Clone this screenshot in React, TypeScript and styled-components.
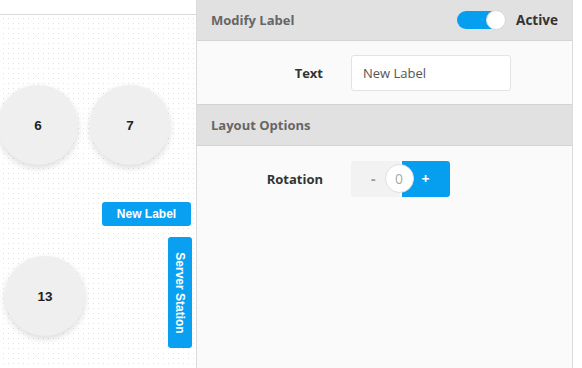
import styled, { createGlobalStyle } from 'styled-components';

const GlobalStyle = createGlobalStyle`
  * { box-sizing: border-box; }
  body {
    margin: 0;
    background: #ffffff;
    font-family: 'Open Sans', 'Liberation Sans', sans-serif;
  }
`;

type Node = { id: string; x: number; y: number };

const TABLES: Node[] = [
  { id: '6', x: -2, y: 70 },
  { id: '7', x: 90, y: 70 },
  { id: '13', x: 5, y: 241 },
];

const App = () => {
  return (
    <>
      <GlobalStyle />
      <Container>
        <CanvasPane>
          <TopStrip />
          <Canvas>
            {TABLES.map((table) => (
              <TableNode key={table.id} $x={table.x} $y={table.y}>
                {table.id}
              </TableNode>
            ))}
            <LabelNode $x={102} $y={187}>New Label</LabelNode>
            <VerticalLabel $x={168} $y={222}>
              <span>Server Station</span>
            </VerticalLabel>
          </Canvas>
        </CanvasPane>
        <EditorPanel>
          <SectionHeader $top={false}>
            <HeaderTitle>Modify Label</HeaderTitle>
            <ToggleWrap>
              <Toggle>
                <Knob />
              </Toggle>
              <ToggleText>Active</ToggleText>
            </ToggleWrap>
          </SectionHeader>
          <FieldRow>
            <FieldLabel>Text</FieldLabel>
            <TextInput defaultValue="New Label" />
          </FieldRow>
          <SectionHeader $top>
            <HeaderTitle>Layout Options</HeaderTitle>
          </SectionHeader>
          <FieldRow $offset={1}>
            <FieldLabel>Rotation</FieldLabel>
            <Stepper>
              <MinusButton>-</MinusButton>
              <StepValue>0</StepValue>
              <PlusButton>+</PlusButton>
            </Stepper>
          </FieldRow>
          <PanelFill />
        </EditorPanel>
      </Container>
    </>
  );
};

const Container = styled.div`
  display: flex;
  width: 582px;
  height: 368px;
  overflow: hidden;
`;

const CanvasPane = styled.div`
  display: flex;
  flex-direction: column;
  width: 197px;
  border-right: 1px solid #dcdcdc;
`;

const TopStrip = styled.div`
  height: 15px;
  background: #ffffff;
  border-bottom: 1px solid #d9d9d9;
`;

const Canvas = styled.div`
  position: relative;
  flex: 1;
  overflow: hidden;
  background-color: #ffffff;
  background-image: radial-gradient(#e2e2e2 0.8px, transparent 0.9px);
  background-size: 5px 5px;
  background-position: 1px 1px;
  font-family: 'Liberation Sans', Arial, sans-serif;
`;

const TableNode = styled.div<{ $x: number; $y: number }>`
  position: absolute;
  left: ${({ $x }) => $x}px;
  top: ${({ $y }) => $y}px;
  width: 80px;
  height: 80px;
  border-radius: 50%;
  background: #efefef;
  box-shadow: 0 3px 7px rgba(0, 0, 0, 0.14);
  display: flex;
  align-items: center;
  justify-content: center;
  font-size: 13.5px;
  font-weight: 700;
  color: #222;
`;

const LabelNode = styled.div<{ $x: number; $y: number }>`
  position: absolute;
  left: ${({ $x }) => $x}px;
  top: ${({ $y }) => $y}px;
  width: 89px;
  height: 24px;
  border-radius: 3px;
  background: #0aa0f2;
  color: #ffffff;
  font-size: 12px;
  font-weight: 700;
  display: flex;
  align-items: center;
  justify-content: center;
`;

const VerticalLabel = styled(LabelNode)`
  width: 24px;
  height: 111px;

  span {
    white-space: nowrap;
    transform: rotate(90deg);
  }
`;

const EditorPanel = styled.div`
  display: flex;
  flex-direction: column;
  width: 376px;
  border-right: 1px solid #dcdcdc;
  background: #fafafa;
`;

const SectionHeader = styled.div<{ $top: boolean }>`
  display: flex;
  align-items: center;
  justify-content: space-between;
  height: ${({ $top }) => ($top ? '42px' : '41px')};
  padding: 0 14px;
  background: #e1e1e1;
  border-top: ${({ $top }) => ($top ? '1px solid #d4d4d4' : 'none')};
  border-bottom: 1px solid #d4d4d4;
`;

const HeaderTitle = styled.div`
  font-size: 13px;
  font-weight: 700;
  color: #666;
`;

const ToggleWrap = styled.div`
  display: flex;
  align-items: center;
  gap: 11px;
`;

const Toggle = styled.div`
  position: relative;
  width: 48px;
  height: 18px;
  border-radius: 9px;
  background: #069ff0;
`;

const Knob = styled.div`
  position: absolute;
  right: -1px;
  top: -1px;
  width: 20px;
  height: 20px;
  border-radius: 50%;
  background: #ffffff;
  border: 1px solid #d8d8d8;
`;

const ToggleText = styled.div`
  font-size: 13.5px;
  font-weight: 700;
  color: #333;
`;

const FieldRow = styled.div<{ $offset?: number }>`
  display: flex;
  align-items: center;
  height: 63px;
  gap: 28px;
  padding-top: ${({ $offset }) => ($offset ?? 0) * 2}px;
`;

const FieldLabel = styled.div`
  width: 126px;
  text-align: right;
  font-size: 13px;
  font-weight: 700;
  color: #333;
`;

const TextInput = styled.input`
  width: 160px;
  height: 36px;
  padding: 0 11px;
  border: 1px solid #e3e3e3;
  border-radius: 3px;
  background: #ffffff;
  font-family: inherit;
  font-size: 13px;
  color: #555;
  outline: none;
`;

const Stepper = styled.div`
  display: flex;
  align-items: center;
  width: 99px;
  height: 36px;
  border-radius: 3px;
`;

const StepButton = styled.div`
  flex: 1;
  height: 36px;
  display: flex;
  align-items: center;
  font-size: 14px;
  font-weight: 700;
`;

const MinusButton = styled(StepButton)`
  background: #f2f2f2;
  color: #999;
  border-radius: 3px 0 0 3px;
  padding-left: 20px;
  margin-right: -15px;
`;

const PlusButton = styled(StepButton)`
  background: #069ff0;
  color: #ffffff;
  border-radius: 0 3px 3px 0;
  padding-left: 20px;
  margin-left: -12px;
`;

const StepValue = styled.div`
  position: relative;
  z-index: 1;
  width: 29px;
  height: 29px;
  border-radius: 50%;
  background: #ffffff;
  border: 1px solid #dedede;
  display: flex;
  align-items: center;
  justify-content: center;
  font-size: 14px;
  color: #aaa;
`;

const PanelFill = styled.div`
  flex: 1;
`;

export default App;
